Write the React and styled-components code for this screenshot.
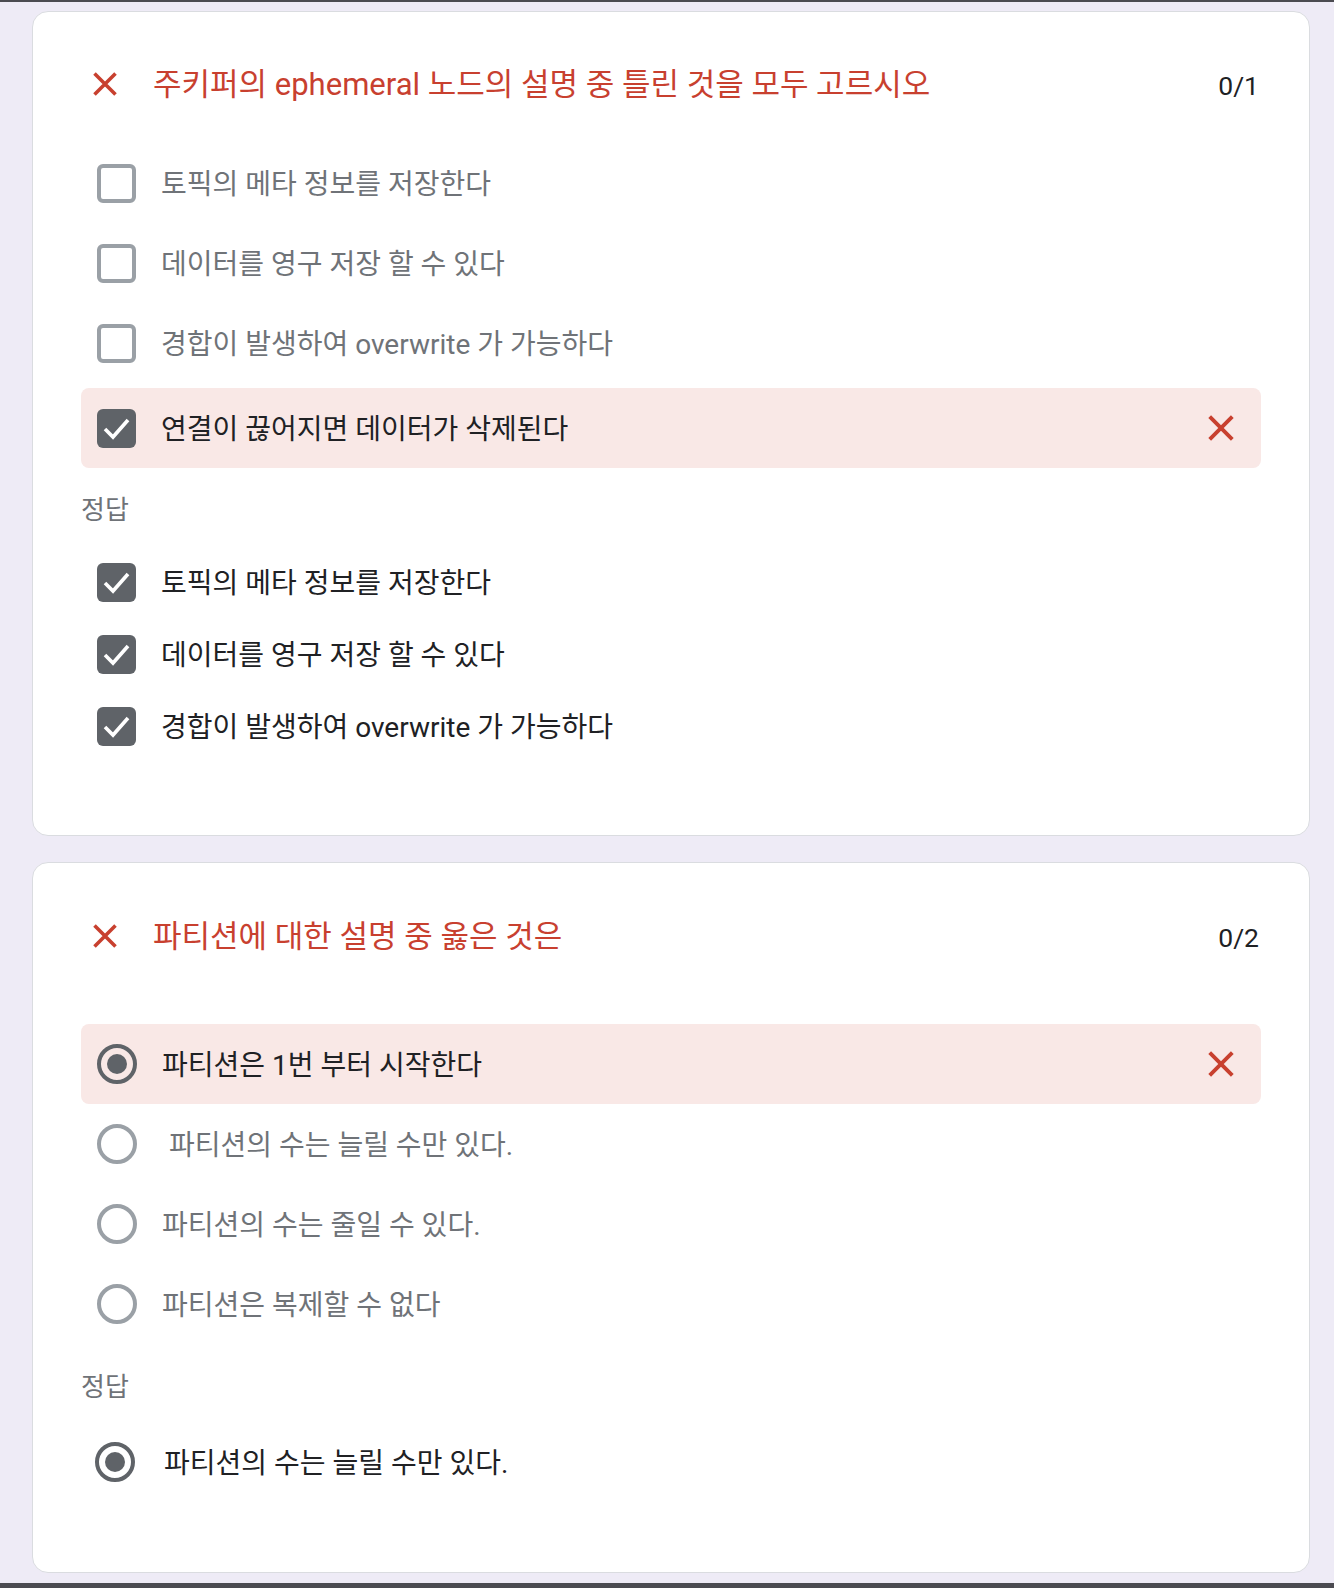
import React from 'react';
import styled, { createGlobalStyle } from 'styled-components';

const GlobalStyle = createGlobalStyle`
  html, body {
    margin: 0;
    padding: 0;
    background: #eeebf6;
  }
  body {
    font-family: Roboto, "Noto Sans CJK KR", sans-serif;
  }
`;

const Page = styled.div`
  width: 1334px;
  min-height: 1588px;
  display: flex;
  flex-direction: column;
  background: #eeebf6;
`;

const EdgeBar = styled.div`
  height: ${p => p.h}px;
  background: #4b4b51;
  flex-shrink: 0;
`;

const Stack = styled.div`
  display: flex;
  flex-direction: column;
  gap: 26px;
  padding: 9px 24px 10px 32px;
`;

const Card = styled.section`
  background: #fff;
  border: 1px solid #dadce0;
  border-radius: 16px;
  padding: ${p => p.pt}px 48px ${p => p.pb}px;
  display: flex;
  flex-direction: column;
`;

const Header = styled.div`
  height: 50px;
  display: flex;
  align-items: center;
  margin-bottom: ${p => p.gap}px;
`;

const HeaderMark = styled.span`
  width: 26px;
  height: 26px;
  margin-left: 11px;
  margin-right: 35px;
  display: flex;
`;

const Title = styled.h2`
  flex: 1;
  margin: 1px 0 0;
  font-size: 31px;
  line-height: 40px;
  font-weight: 400;
  color: #c8402f;
`;

const Score = styled.span`
  font-size: 26.5px;
  margin-top: 3px;
  color: #202124;
  margin-right: 2px;
`;

const Row = styled.div`
  height: ${p => p.h || 80}px;
  display: flex;
  align-items: center;
  padding: 0 26px 0 ${p => p.pl || 16}px;
  border-radius: 8px;
  background: ${p => (p.wrong ? '#f9e8e6' : 'transparent')};
  margin-top: ${p => p.mt || 0}px;
`;

const Label = styled.span`
  flex: 1;
  margin-left: ${p => p.ml || 25}px;
  margin-top: 3px;
  font-size: 28px;
  line-height: 36px;
  color: ${p => (p.active ? '#202124' : '#6f7378')};
  white-space: pre;
`;

const Box = styled.span`
  width: 39px;
  height: 39px;
  box-sizing: border-box;
  border-radius: 6px;
  border: ${p => (p.checked ? 'none' : '4px solid #9aa0a6')};
  background: ${p => (p.checked ? '#5f6368' : 'transparent')};
  display: flex;
  flex-shrink: 0;
`;

const Radio = styled.span`
  width: 40px;
  height: 40px;
  box-sizing: border-box;
  border-radius: 50%;
  border: 4px solid ${p => (p.checked ? '#5f6368' : '#9aa0a6')};
  display: flex;
  align-items: center;
  justify-content: center;
  flex-shrink: 0;

  &::after {
    content: '';
    display: ${p => (p.checked ? 'block' : 'none')};
    width: 20px;
    height: 20px;
    border-radius: 50%;
    background: #5f6368;
  }
`;

const SectionLabel = styled.div`
  height: 36px;
  line-height: 36px;
  font-size: 26px;
  color: #6f7378;
  margin: ${p => p.mt}px 0 ${p => p.mb}px;
`;

const Cross = ({ size }) => (
  <svg width={size} height={size} viewBox="0 0 26 26">
    <path d="M2.5 2.5 L23.5 23.5 M23.5 2.5 L2.5 23.5" stroke="#c8402f" strokeWidth="3.6" fill="none" />
  </svg>
);

const Check = () => (
  <svg width="39" height="39" viewBox="0 0 39 39">
    <path d="M8 20 L16 28 L31 11" stroke="#fff" strokeWidth="3.6" fill="none" />
  </svg>
);

const CheckOption = ({ checked, active, wrong, h, mt, children }) => (
  <Row wrong={wrong} h={h} mt={mt}>
    <Box checked={checked}>{checked && <Check />}</Box>
    <Label active={active}>{children}</Label>
    {wrong && <Cross size={28} />}
  </Row>
);

const RadioOption = ({ checked, active, wrong, h, pl, ml, children }) => (
  <Row wrong={wrong} h={h} pl={pl}>
    <Radio checked={checked} />
    <Label active={active} ml={ml}>{children}</Label>
    {wrong && <Cross size={28} />}
  </Row>
);

const QuestionHeader = ({ title, score, gap }) => (
  <Header gap={gap}>
    <HeaderMark><Cross size={26} /></HeaderMark>
    <Title>{title}</Title>
    <Score>{score}</Score>
  </Header>
);

const firstOptions = ['토픽의 메타 정보를 저장한다', '데이터를 영구 저장 할 수 있다', '경합이 발생하여 overwrite 가 가능하다'];

export default function App() {
  return (
    <Page>
      <GlobalStyle />
      <EdgeBar h={2} />
      <Stack>
        <Card pt={47} pb={73}>
          <QuestionHeader title="주키퍼의 ephemeral 노드의 설명 중 틀린 것을 모두 고르시오" score="0/1" gap={34} />
          {firstOptions.map(t => (
            <CheckOption key={t}>{t}</CheckOption>
          ))}
          <CheckOption checked active wrong mt={5}>연결이 끊어지면 데이터가 삭제된다</CheckOption>
          <SectionLabel mt={24} mb={18}>정답</SectionLabel>
          {firstOptions.map(t => (
            <CheckOption key={t} checked active h={72}>{t}</CheckOption>
          ))}
        </Card>

        <Card pt={48} pb={74}>
          <QuestionHeader title="파티션에 대한 설명 중 옳은 것은" score="0/2" gap={63} />
          <RadioOption checked active wrong>파티션은 1번 부터 시작한다</RadioOption>
          <RadioOption>{' 파티션의 수는 늘릴 수만 있다.'}</RadioOption>
          <RadioOption>파티션의 수는 줄일 수 있다.</RadioOption>
          <RadioOption>파티션은 복제할 수 없다</RadioOption>
          <SectionLabel mt={25} mb={21}>정답</SectionLabel>
          <RadioOption checked active h={72} pl={14} ml={29}>파티션의 수는 늘릴 수만 있다.</RadioOption>
        </Card>
      </Stack>
      <EdgeBar h={6} />
    </Page>
  );
}
